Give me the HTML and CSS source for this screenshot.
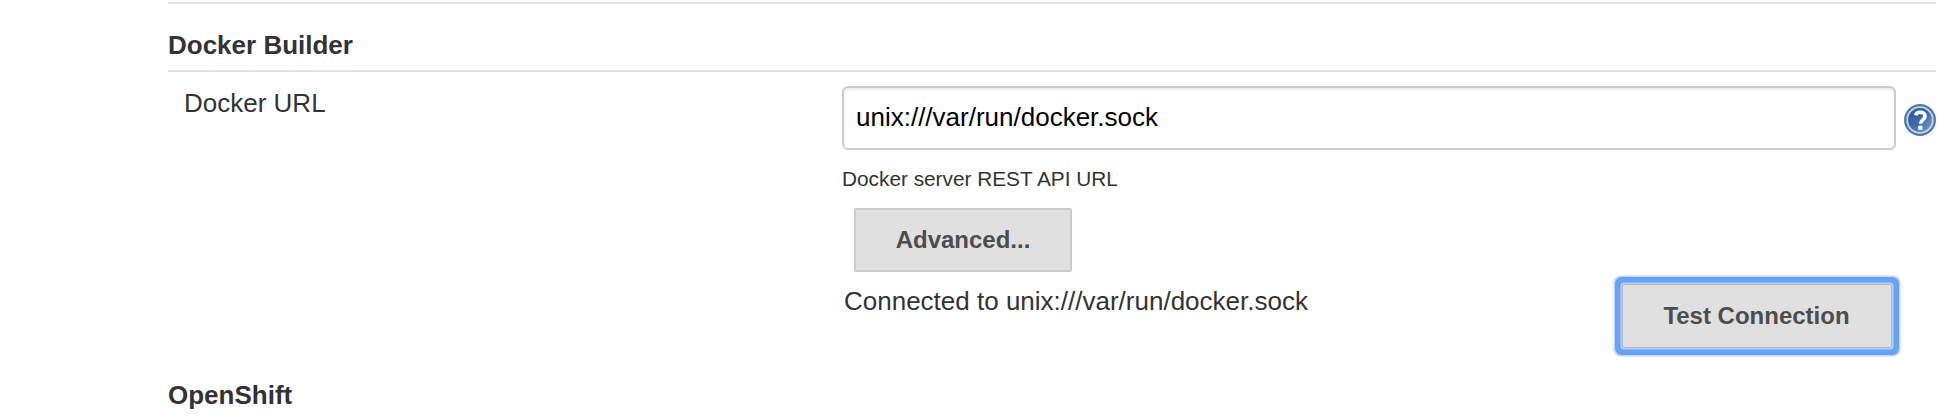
FILE: index.html
```html
<!DOCTYPE html>
<html lang="en">
<head>
<meta charset="utf-8">
<title>Configure System</title>
<link rel="stylesheet" href="styles.css">
</head>
<body>
<main class="config">
  <h2 class="section-title">Docker Builder</h2>
  <section class="row">
    <label class="label" for="docker-url">Docker URL</label>
    <div class="settings">
      <div class="field">
        <input class="input" id="docker-url" type="text" value="unix:///var/run/docker.sock">
        <a class="help" href="#" aria-label="Help">
          <svg width="32" height="32" viewBox="0 0 32 32">
            <defs>
              <linearGradient id="disc" x1="0" y1="0" x2="1" y2="1">
                <stop offset="0" stop-color="#2b5592"/>
                <stop offset=".5" stop-color="#3f6cab"/>
                <stop offset="1" stop-color="#7ea3d0"/>
              </linearGradient>
            </defs>
            <circle cx="16" cy="16" r="16" fill="#5179ae"/>
            <circle cx="16" cy="16" r="12.800" fill="url(#disc)" stroke="#c5d4e8" stroke-width="1.800"/>
            <path d="M11.600 11.200C12.200 9 13.800 8.200 16 8.200c2.900 0 5 1.400 5 3.800 0 3.700-4.400 3.900-4.400 7.800" fill="none" stroke="#fff" stroke-width="3.600"/>
            <rect x="14.200" y="21.800" width="4.200" height="4" fill="#fff"/>
          </svg>
        </a>
      </div>
      <p class="description">Docker server REST API URL</p>
      <button class="button advanced" type="button">Advanced...</button>
      <div class="validation">
        <span class="status">Connected to unix:///var/run/docker.sock</span>
        <button class="button test" type="button">Test Connection</button>
      </div>
    </div>
  </section>
  <h2 class="section-title next">OpenShift</h2>
</main>
</body>
</html>
```
FILE: styles.css
```css
* {
  box-sizing: border-box;
}

body {
  margin: 0;
  background: #fff;
  color: #333;
  font: 26px/30px "Liberation Sans", Helvetica, Arial, sans-serif;
  overflow: hidden;
}

.config {
  width: 1768px;
  margin: 2px 0 0 168px;
  border-top: 2px solid #e0e0e0;
}

.section-title {
  margin: 0;
  height: 68px;
  padding-top: 26px;
  border-bottom: 2px solid #e0e0e0;
  font-size: 26px;
  font-weight: 700;
  line-height: 30px;
}

.row {
  display: grid;
  grid-template-columns: 674px 1fr;
  height: 296px;
}

.label {
  padding: 16px 0 0 16px;
}

.field {
  display: flex;
  align-items: center;
  gap: 8px;
  padding-top: 14px;
}

.input {
  width: 1054px;
  height: 64px;
  padding: 0 12px 2px;
  border: 2px solid #ccc;
  border-radius: 6px;
  background: #fff;
  box-shadow: inset 0 2px 3px rgba(0, 0, 0, .08);
  color: #000;
  font: inherit;
}

.help {
  height: 32px;
  margin-top: 4px;
}

.help svg {
  display: block;
}

.description {
  margin: 16px 0 0;
  height: 42px;
  font-size: 20.800px;
  line-height: 26px;
}

.button {
  display: block;
  height: 64px;
  padding: 0;
  border: 2px solid #ccc;
  border-radius: 2px;
  background: #e0e0e0;
  color: #4d4d4d;
  font: 700 24px/28px "Liberation Sans", Helvetica, Arial, sans-serif;
}

.advanced {
  width: 218px;
  margin-left: 12px;
}

.validation {
  display: flex;
  justify-content: space-between;
  padding: 12px 44px 0 2px;
}

.status {
  padding-top: 2px;
}

.test {
  width: 270px;
  padding-right: 1px;
  border: 1px solid #b5b9bf;
  box-shadow: 0 0 0 1.500px #b1cef8, 0 0 0 7px #69a1f6, 0 0 0 8.500px #c3dafb;
}

.next {
  height: 60px;
  padding-top: 12px;
  border: 0;
}
```
